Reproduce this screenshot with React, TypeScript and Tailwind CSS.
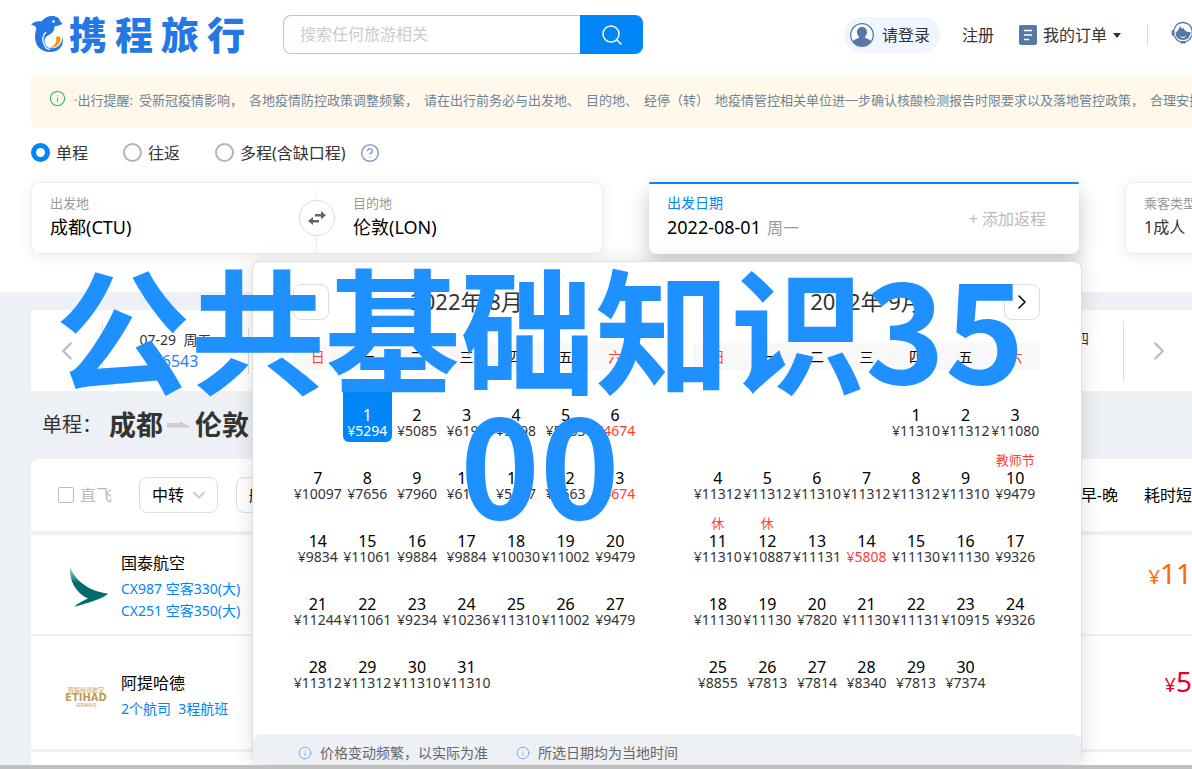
import type { ReactNode } from "react";
import { ChevronDown, ChevronLeft, ChevronRight, CircleHelp, Info, Search } from "lucide-react";

type Day = { day: number; price: number; low?: boolean; tag?: string };

const weekdays = ["日", "一", "二", "三", "四", "五", "六"];

const augustPrices = [
  5294, 5085, 6198, 5898, 5263, 4674,
  10097, 7656, 7960, 6198, 5287, 5563, 4674,
  9834, 11061, 9884, 9884, 10030, 11002, 9479,
  11244, 11061, 9234, 10236, 11310, 11002, 9479,
  11312, 11312, 11310, 11310,
];

const septemberPrices = [
  11310, 11312, 11080,
  11312, 11312, 11310, 11312, 11312, 11310, 9479,
  11310, 10887, 11131, 5808, 11130, 11130, 9326,
  11130, 11130, 7820, 11130, 11131, 10915, 9326,
  8855, 7813, 7814, 8340, 7813, 7374,
];

const tags: Record<number, string> = { 10: "教师节", 11: "休", 12: "休" };

const august: Day[] = augustPrices.map((price, i) => ({ day: i + 1, price, low: price === 4674 }));
const september: Day[] = septemberPrices.map((price, i) => ({
  day: i + 1,
  price,
  low: price === 5808,
  tag: tags[i + 1],
}));

const notice = [
  "·出行提醒:",
  "受新冠疫情影响，",
  "各地疫情防控政策调整频繁，",
  "请在出行前务必与出发地、",
  "目的地、",
  "经停（转）",
  "地疫情管控相关单位进一步确认核酸检测报告时限要求以及落地管控政策，",
  "合理安排出行。",
];

function toWeeks(days: Day[], offset: number) {
  const cells: (Day | null)[] = [...Array(offset).fill(null), ...days];
  while (cells.length % 7) cells.push(null);
  const weeks: (Day | null)[][] = [];
  for (let i = 0; i < cells.length; i += 7) weeks.push(cells.slice(i, i + 7));
  return weeks;
}

function Dolphin() {
  return (
    <svg viewBox="0 0 32 36" className="h-9 w-8 shrink-0" aria-hidden="true">
      <path fill="#2577e3" d="M0 8.500C3 5.500 7 4.500 10.500 5.500C13 2 17 0 21 0C26 0 28.500 2.500 29 5L31.500 7.500C29.500 9.500 26.500 9.500 23.500 10.500C23.500 14 22 16.500 19.500 18C16.500 19.800 13.500 21 13.500 25C13.500 29.500 17 32.500 21 32.300C27 32 31.500 27.500 31.300 21C33.500 28 29.500 36 19 36C9 36 4 29 4 21C4 17.500 5 15 5.300 12C4.300 10 2.500 9 0 8.500Z" />
      <path fill="none" stroke="#fff" strokeWidth="1.200" d="M15 16C12 19 11 24 13 28.500C14 31 16 33 19 33.500" />
      <path fill="#ff9913" d="M25 21.500C26 19.500 29 20 29.500 22C30 28 25 32.300 18 32C23 30 26 27 25 21.500Z" />
      <circle cx="22.500" cy="5.500" r="1.300" fill="#fff" />
    </svg>
  );
}

function Header() {
  return (
    <header className="flex h-[75px] items-start whitespace-nowrap pl-[31px]">
      <a href="#home" aria-label="携程旅行" className="mt-4 flex h-9 w-[218px] shrink-0 items-center gap-1.5 text-[#2577e3]">
        <Dolphin />
        <span className="flex gap-2 text-[38px] leading-9 font-black">
          <span>携</span><span>程</span><span>旅</span><span>行</span>
        </span>
      </a>
      <form className="mt-[15px] ml-[34px] flex h-[39px] w-[360px] shrink-0">
        <input
          type="text"
          aria-label="搜索"
          placeholder="搜索任何旅游相关"
          className="min-w-0 flex-1 rounded-l-lg border border-r-0 border-[#99cffa] pb-0.5 pl-4 text-base outline-none placeholder:text-[#ccc]"
        />
        <button type="button" aria-label="搜索" className="flex w-[63px] items-center justify-center rounded-r-lg bg-[#0086f6] text-white">
          <Search size={24} strokeWidth={1.5} />
        </button>
      </form>
      <nav className="mt-[17px] ml-[201px] flex h-9 shrink-0 items-center text-base text-[#333]">
        <a href="#login" className="flex h-9 items-center gap-2 rounded-full bg-[#f0f6ff] pr-2.5 pl-1.5">
          <svg viewBox="0 0 24 24" className="size-6">
            <circle cx="12" cy="12" r="11.300" fill="#fff" stroke="#5678a8" strokeWidth="1.300" />
            <path fill="#5678a8" d="M12 4c3.200 0 5 2.200 5 4.900 0 2-.8 3.600-1.900 4.600v1.300l4.800 2.100c.8.500 1 1.200 1 1.900A11 11 0 0 1 12 23a11 11 0 0 1-8.900-4.200c0-.7.200-1.400 1-1.900l4.800-2.100v-1.300C7.800 12.500 7 10.900 7 8.900 7 6.200 8.800 4 12 4Z" />
          </svg>
          请登录
        </a>
        <a href="#register" className="ml-[22px]">注册</a>
        <a href="#orders" className="ml-[25px] flex items-center gap-1.5">
          <svg viewBox="0 0 18 20" className="h-5 w-[18px]">
            <rect width="18" height="20" rx="2" fill="#5678a8" />
            <path stroke="#fff" strokeWidth="1.500" d="M5 5.500h8M5 10h8M5 14.500h5" />
          </svg>
          我的订单
          <svg viewBox="0 0 8 5" className="h-[5px] w-2"><path d="M0 0h8L4 5Z" fill="#333" /></svg>
        </a>
        <span className="ml-[26px] h-[22px] w-px bg-[#ddd]" />
        <a href="#service" aria-label="客服" className="mb-1 ml-[23px] shrink-0">
          <svg viewBox="0 0 24 24" className="size-6">
            <path fill="none" stroke="#5678a8" strokeWidth="1.300" d="M3 9C4 4 8 1.500 12 1.500S20 4 21 9M3.500 15c1 3 3.500 5 6.500 6M20.500 15c-1 3-3.500 5-6.500 6" />
            <path fill="#5678a8" d="M1 9h2.500v6H2.300A1.600 1.600 0 0 1 .7 13.400V10ZM23 9h-2.500v6h1.200a1.600 1.600 0 0 0 1.600-1.600V10Z" />
            <path fill="#5678a8" d="M9 4.500L10.500 8L12 6.500C13 9.500 16 11.500 19.500 11C19.500 16 16.500 19 12 19S4.500 16 4.500 12C6.500 10 8.500 8 9 4.500ZM9.500 20h5v2.500h-5Z" />
            <path fill="none" stroke="#fff" d="M9.500 15.500c1.500 1.300 3.500 1.300 5 0" />
          </svg>
        </a>
      </nav>
    </header>
  );
}

function TripType({ label, checked }: { label: string; checked?: boolean }) {
  return (
    <label className="flex items-center gap-1.5">
      <input
        type="radio"
        name="trip"
        defaultChecked={checked}
        className="size-[19px] appearance-none rounded-full border-2 border-[#b4b4b4] bg-white checked:border-[5px] checked:border-[#0086f6]"
      />
      {label}
    </label>
  );
}

function Field({ label, children }: { label: string; children: ReactNode }) {
  return (
    <div>
      <div className="text-[13px] leading-5 text-[#999]">{label}</div>
      <div className="text-lg leading-7 text-black">{children}</div>
    </div>
  );
}

function SearchPanel() {
  return (
    <div className="flex h-[72px] whitespace-nowrap">
      <div className="flex w-[572px] shrink-0 rounded-lg border border-[#eee] bg-white pt-2.5 pl-[18px] shadow-[0_2px_14px_rgba(0,0,0,0.08)]">
        <div className="w-[249px]"><Field label="出发地">成都(CTU)</Field></div>
        <div className="relative -mt-2.5 mr-[18px] flex w-9 items-center justify-center">
          <span className="absolute inset-y-0 left-[17px] w-px bg-gradient-to-b from-white via-[#ddd] to-[#eee]" />
          <button aria-label="交换" className="relative flex size-9 items-center justify-center rounded-full border border-[#ddd] bg-white">
            <svg viewBox="0 0 18 14" className="h-3.5 w-[18px]">
              <path fill="#666" d="M7 3h6V0l5 4.200-5 4V5.500H7ZM11 11.500H5V14L0 10l5-4v3h6Z" />
            </svg>
          </button>
        </div>
        <Field label="目的地">伦敦(LON)</Field>
      </div>
      <div className="ml-[46px] flex w-[430px] shrink-0 items-center justify-between rounded-t-xs rounded-b-lg border-t-2 border-[#0086f6] bg-white pr-[33px] pl-[18px] shadow-[0_8px_20px_rgba(0,0,0,0.22)]">
        <div className="mb-1">
          <div className="text-[14px] leading-5 text-[#0086f6]">出发日期</div>
          <div className="text-lg leading-7 text-black">2022-08-01<span className="ml-1.5 text-base text-[#999]">周一</span></div>
        </div>
        <button className="text-base text-[#bbb]">+ 添加返程</button>
      </div>
      <div className="ml-[46px] w-[300px] shrink-0 rounded-lg border border-[#eee] bg-white pt-2.5 pl-[18px] shadow-[0_2px_14px_rgba(0,0,0,0.08)]">
        <div className="text-[13px] leading-5 text-[#999]">乘客类型</div>
        <div className="text-base leading-7 text-[#333]">1成人</div>
      </div>
    </div>
  );
}

function Month({ title, days, offset, selected }: { title: string; days: Day[]; offset: number; selected?: number }) {
  return (
    <section className="min-w-0 flex-1">
      <h2 className="flex h-14 items-center justify-center text-[22px] text-[#333]">{title}</h2>
      <table className="mt-[14px] w-full table-fixed border-collapse text-center">
        <thead>
          <tr className="h-[27px] bg-[#f8f8f8] text-sm">
            {weekdays.map((name, i) => (
              <th key={name} className={i % 6 === 0 ? "font-normal text-[#ff3b30]" : "font-normal text-black"}>{name}</th>
            ))}
          </tr>
          <tr className="h-[9px]" />
        </thead>
        <tbody>
          {toWeeks(days, offset).map((week, w) => (
            <tr key={w} className="h-[63px]">
              {week.map((d, i) => (
                <td key={i} className="p-0 align-bottom">
                  {d && (
                    <button className={d.day === selected ? "flex h-[50px] w-full flex-col items-center rounded-b-md bg-[#0086f6] text-white" : "flex h-[50px] w-full flex-col items-center text-[#333]"}>
                      <span className="-mt-[3px] h-[17px] text-[13px] leading-[17px] whitespace-nowrap text-[#ff3b30]">{d.tag}</span>
                      <span className={d.day === selected ? "text-base leading-[18px]" : "text-base leading-[18px] text-black"}>{d.day}</span>
                      <span className={d.low ? "text-sm leading-[14px] text-[#ff3b30]" : "text-sm leading-[14px]"}>¥{d.price}</span>
                    </button>
                  )}
                </td>
              ))}
            </tr>
          ))}
        </tbody>
      </table>
    </section>
  );
}

function Calendar() {
  return (
    <div className="absolute top-[261px] left-[252px] flex h-[503px] w-[830px] flex-col rounded-lg border border-b-0 border-[#ddd] bg-white shadow-[0_2px_20px_rgba(0,0,0,0.14)]">
      <div className="relative flex flex-1 gap-[53px] pt-[11px] pr-[41px] pl-10">
        <button aria-label="上个月" className="absolute top-[22px] left-10 flex size-9 items-center justify-center rounded-lg border border-[#ddd]">
          <ChevronLeft size={20} strokeWidth={1.5} className="text-[#ccc]" />
        </button>
        <Month title="2022年 8月" days={august} offset={1} selected={1} />
        <Month title="2022年 9月" days={september} offset={4} />
        <button aria-label="下个月" className="absolute top-[22px] right-[41px] flex size-9 items-center justify-center rounded-lg border border-[#ddd]">
          <ChevronRight size={24} strokeWidth={1.5} />
        </button>
      </div>
      <footer className="flex h-[30px] items-center gap-7 rounded-t-lg bg-[#edf0f5] pt-2 pl-[45px] text-sm text-[#666]">
        <span className="flex items-center gap-2"><Info size={14} strokeWidth={1.5} className="text-[#6ba8ee]" />价格变动频繁，以实际为准</span>
        <span className="flex items-center gap-2"><Info size={14} strokeWidth={1.5} className="text-[#6ba8ee]" />所选日期均为当地时间</span>
      </footer>
    </div>
  );
}

function Flight({ logo, name, details, price }: { logo: ReactNode; name: string; details: ReactNode; price: ReactNode }) {
  return (
    <div className="flex items-start">
      <div className="flex w-[90px] justify-end pt-4 pr-3">{logo}</div>
      <div>
        <div className="text-base leading-6 text-black">{name}</div>
        <div className="mt-[3px] text-sm leading-[22px] text-[#0086f6]">{details}</div>
      </div>
      <div className="mt-1 ml-auto leading-9">{price}</div>
    </div>
  );
}

export default function App() {
  return (
    <main className="relative h-screen overflow-hidden bg-[#edf0f5] font-['Noto_Sans','Noto_Sans_CJK_SC',sans-serif]">
      <div className="h-[292px] bg-white">
        <Header />
        <div className="ml-[31px] flex h-[52px] items-center gap-1.5 overflow-hidden bg-[#fff8eb] pl-[18px] text-[13px] whitespace-nowrap text-[#6f8497]">
          <Info size={17} strokeWidth={1.5} className="mr-0.5 mb-1.5 shrink-0 text-[#16b777]" />
          {notice.map(part => <span key={part} className="shrink-0">{part}</span>)}
        </div>
        <div className="ml-[31px] flex h-[55px] items-center gap-[35px] pb-1 text-base text-[#333]">
          <TripType label="单程" checked />
          <TripType label="往返" />
          <div className="flex items-center gap-3.5">
            <TripType label="多程(含缺口程)" />
            <CircleHelp size={20} strokeWidth={1.8} className="text-[#8b9dc9]" />
          </div>
        </div>
        <div className="ml-[31px]"><SearchPanel /></div>
      </div>

      <div className="mt-[18px] ml-[31px] flex h-[81px] items-center bg-white">
        <ChevronLeft size={30} strokeWidth={1.8} className="ml-[21px] text-[#bbb]" />
        <span className="ml-5 h-[58px] w-px bg-[#ddd]" />
        <div className="w-[145px] text-center text-[#333]">
          <div className="text-sm leading-5">07-29&nbsp; 周五</div>
          <div className="text-base leading-[22px] text-[#287dfa]">¥6543</div>
        </div>
        <span className="h-[46px] w-px bg-[#ddd]" />
        <span className="mr-[34px] mb-6 ml-auto text-sm text-[#333]">周四</span>
        <span className="mr-5 h-[60px] w-px bg-[#ddd]" />
        <ChevronRight size={30} strokeWidth={1.8} className="mr-[18px] text-[#bbb]" />
      </div>

      <div className="ml-[42px] flex h-[68px] items-center text-xl text-[#333]">
        单程：
        <strong className="ml-[7px] text-[27px]">成都</strong>
        <svg viewBox="0 0 24 8" className="mx-1 h-2 w-6"><path fill="#ccc" d="M0 2h13V0l11 6.500H0Z" /></svg>
        <strong className="text-[27px]">伦敦</strong>
      </div>

      <div className="ml-[31px]">
        <div className="flex h-[72px] items-center rounded-tl-lg bg-white pl-[27px] text-base text-black">
          <label className="flex items-center gap-1.5 text-[#bbb]">
            <input type="checkbox" className="size-4 appearance-none rounded-xs border border-[#bbb]" />
            直飞
          </label>
          <button className="ml-[27px] flex h-9 w-[79px] items-center justify-between rounded-lg border border-[#ddd] pr-2 pl-3">
            中转<ChevronDown size={20} strokeWidth={2.5} className="text-[#ccc]" />
          </button>
          <button className="ml-[18px] flex h-9 w-[100px] items-center rounded-lg border border-[#ddd] pl-3">航司</button>
          <span className="ml-auto">早-晚</span>
          <span className="ml-[26px]">耗时短</span>
        </div>
        <div className="mt-1 h-[99px] bg-white pt-4">
          <Flight
            name="国泰航空"
            details={<>CX987 空客330(大)<br />CX251 空客350(大)</>}
            price={<div className="text-[#ff6600]"><span className="text-xl">¥</span><span className="text-[28px]">11</span></div>}
            logo={
              <svg viewBox="0 0 40 40" className="size-10">
                <defs><linearGradient id="wing" x2="0" y2="1"><stop stopColor="#b8d5d3" /><stop offset=".4" stopColor="#006b6b" /></linearGradient></defs>
                <path fill="url(#wing)" d="M1 0C5 10 12 17 22 22C28 24.500 34 26 39 26.500C35 30.500 28 33 20 35.500C14 37.500 9 38.500 5 40C9 36 14 34 19 31.500C7 26 0 14 1 0Z" />
              </svg>
            }
          />
        </div>
        <div className="mt-0.5 h-[113px] bg-white pt-[35px]">
          <Flight
            name="阿提哈德"
            details="2个航司&nbsp; 3程航班"
            price={<div className="-mt-3 text-[#e3002b]"><span className="text-xl">¥</span><span className="text-[28px]">5</span></div>}
            logo={
              <div className="flex w-[46px] flex-col items-center whitespace-nowrap text-[#bd9a5f]">
                <span className="text-[6px] leading-[6px]">阿提哈德航空</span>
                <span className="font-['DejaVu_Sans',sans-serif] text-[10px] leading-[9px] font-bold">ETIHAD</span>
                <span className="text-[5px] leading-[6px]">AIRWAYS</span>
              </div>
            }
          />
        </div>
        <div className="mt-[3px] h-4 bg-white" />
      </div>

      <Calendar />
      <div className="absolute inset-x-0 bottom-0 h-1 bg-[#c0c0c0]" />
      <div className="pointer-events-none absolute top-[258px] left-0 w-[1080px] text-center font-['Noto_Sans_CJK_SC',sans-serif] text-[135px] leading-none font-bold text-[#1e90ff]">
        公共基础知识35<br />00
      </div>
    </main>
  );
}
